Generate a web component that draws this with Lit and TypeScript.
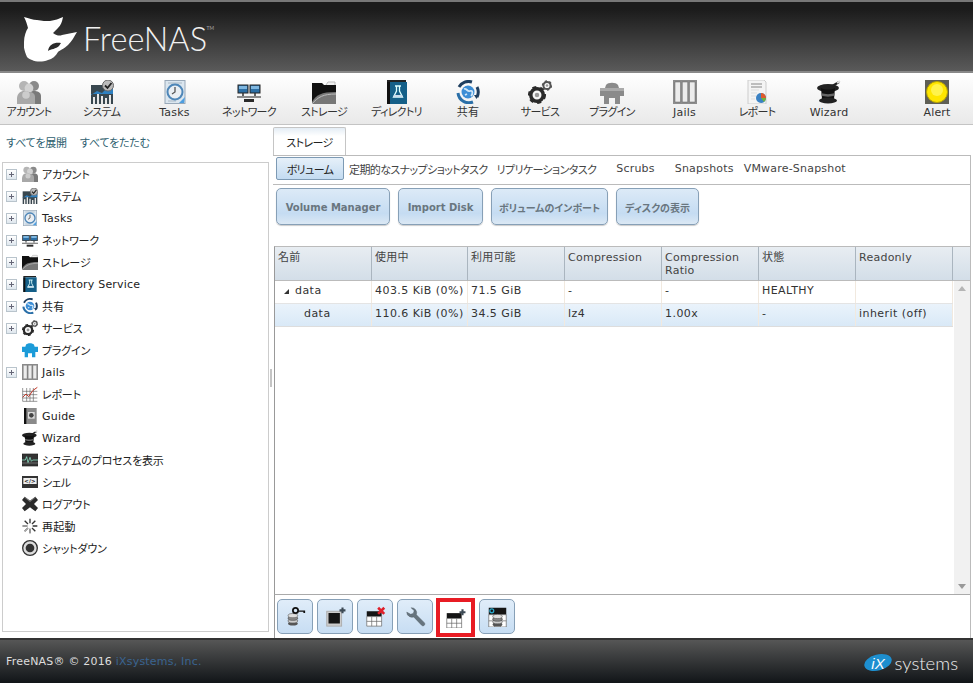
import { LitElement, html, css, svg } from "lit";
import { customElement } from "lit/decorators.js";

const gear = (x: number, y: number, r: number, c: string) => svg`<circle cx=${x} cy=${y} r=${r * 0.78} fill="none" stroke=${c} stroke-width=${r * 0.44}/><circle cx=${x} cy=${y} r=${r * 0.98} fill="none" stroke=${c} stroke-width=${r * 0.3} stroke-dasharray=${`${r * 0.5} ${r * 0.5}`}/><circle cx=${x} cy=${y} r=${r * 0.28} fill="#999"/>`;
const disks = (x: number, y: number) => svg`<ellipse cx=${x} cy=${y + 9} rx="5.5" ry="2.4" fill="#555"/><ellipse cx=${x} cy=${y + 6} rx="5.5" ry="2.4" fill="#ccc" stroke="#555" stroke-width=".7"/><ellipse cx=${x} cy=${y + 3} rx="5.5" ry="2.4" fill="#888" stroke="#444" stroke-width=".7"/><ellipse cx=${x} cy=${y} rx="5.5" ry="2.4" fill="#ddd" stroke="#555" stroke-width=".7"/>`;
const grid = (x: number, y: number, w: number, h: number) => svg`<rect x=${x} y=${y} width=${w} height=${h * 0.36} fill="#151515"/><path d=${`M${x} ${y + h * 0.36}h${w}v${h * 0.64}h${-w}zM${x} ${y + h * 0.68}h${w}M${x + w / 3} ${y + h * 0.36}v${h * 0.64}M${x + (2 * w) / 3} ${y + h * 0.36}v${h * 0.64}`} fill="#fff" stroke="#666" stroke-width=".8"/>`;
const plus = (x: number, y: number) => svg`<path d=${`M${x - 3.4} ${y}h6.8M${x} ${y - 3.4}v6.8`} stroke="#3d4a55" stroke-width="2.4"/>`;

const ICONS: Record<string, any> = {
  account: svg`<circle cx="7" cy="6" r="5" fill="#b5b5b5"/><circle cx="17" cy="6" r="5" fill="#8a8a8a"/><path d="M12 24v-9c0-3 2-4 5-4s7 1 7 5v8z" fill="#7a7a7a"/><circle cx="12" cy="8" r="4.400" fill="#d2d2d2"/><path d="M0 24c-1-9 2-13 7-13 2 0 3 0 5 1 4 0 6 2 6 5v7z" fill="#a8a8a8"/><circle cx="9" cy="15" r="3.800" fill="#ccc"/>`,
  system: svg`<rect x="1" y="5" width="22" height="19" fill="#39474f"/><path d="M1 15l6-4 5 2 6-6 5 1v6H1z" fill="#2f80c0"/><path d="M3 24v-7h2v7zm4 0v-10h2v10zm4 0v-8h2v8zm4 0v-6h2v6zm4 0v-9h2v9z" fill="#e8e8e8"/><circle cx="18" cy="5.500" r="5.500" fill="#bbb" stroke="#666"/><path d="M15 5.500l2.500 2.500 4-5" fill="none" stroke="#222" stroke-width="1.800"/>`,
  tasks: svg`<rect x="2" y="0.500" width="20" height="23" fill="#dbe6ef" stroke="#98a8b8"/><path d="M5 3h14M5 21h8" stroke="#aab8c4"/><circle cx="12" cy="12" r="7.500" fill="#e9eef3" stroke="#4e86b8" stroke-width="2"/><path d="M12 7v5l-3 2" fill="none" stroke="#555" stroke-width="1.300"/><path d="M16 23l6-6-1 6z" fill="#4e9ee0"/>`,
  network: svg`<rect x="1" y="5" width="10" height="8" fill="#2c6fa5" stroke="#222"/><rect x="13" y="5" width="10" height="8" fill="#2c6fa5" stroke="#222"/><path d="M2 6h8v3H2zm12 0h8v3h-8z" fill="#7db6e0"/><path d="M6 13v3M18 13v3" stroke="#333" stroke-width="1.500"/><path d="M0 16h24v2H0z" fill="#8a8a8a"/><path d="M7 19h10v3H7z" fill="#2a2a2a"/>`,
  storage: svg`<path d="M14 5l2-3h7v8h-9z" fill="#f0f0f0" stroke="#bbb"/><path d="M0 3h10l2 2h12v19H0z" fill="#111"/><path d="M0 22c4-7 9-10 24-10v12H0z" fill="#777"/><path d="M0 24c6-7 11-10 24-10" fill="none" stroke="#bbb"/>`,
  directory: svg`<path d="M2 0h19v2H2z" fill="#222"/><rect x="2" y="2" width="20" height="22" fill="#145f88"/><rect x="2" y="2" width="3" height="22" fill="#111"/><path d="M10 6h6M11.500 6v5l-3 6h9l-3-6V6" fill="none" stroke="#dff" stroke-width="1.300"/><path d="M9 15h8l1 2H8z" fill="#cde"/>`,
  share: svg`<circle cx="12" cy="12" r="6.500" fill="#3c8ed6"/><path d="M8 9c3-1 3 3 6 2s3 3 1 5M9 15l2-1" stroke="#cfe6f8" stroke-width="1.800" fill="none"/><path d="M3 7a11 11 0 0 1 13-5" fill="none" stroke="#1f3f60" stroke-width="3"/><path d="M21 7a11 11 0 0 1 0 10" fill="none" stroke="#1f3f60" stroke-width="3"/><path d="M17 22a11 11 0 0 1-15-9" fill="none" stroke="#2a6fa8" stroke-width="3"/><path d="M18 15l5 0-2.500 4z" fill="#1f3f60"/>`,
  services: svg`${gear(9, 15, 8, "#2a2a2a")}${gear(19, 5.500, 4.600, "#555")}`,
  plugins: svg`<path d="M6 5c2-3 10-3 12 0l1 3h5v8h-4v8h-5v-6h-6v6H4v-8H0V8h5z" fill="#8a8a8a"/><path d="M0 8h24v3H0z" fill="#aaa"/>`,
  pluginsBlue: svg`<path d="M6 4c2-3 10-3 12 0l1 3h5v8h-4v8h-5v-6h-6v6H4v-8H0V7h5z" fill="#1c9bd8"/>`,
  jails: svg`<rect x="0" y="0" width="24" height="24" fill="#8c8c8c"/><path d="M2 2h5.500v20H2zm7.300 0h5.400v20H9.300zm7.200 0H22v20h-5.500z" fill="#ececec" stroke="#666" stroke-width=".5"/>`,
  report: svg`<path d="M3 0h16l2 2v22H3z" fill="#f4f4f4" stroke="#ccc"/><path d="M6 4h11M6 7h11" stroke="#aaa" stroke-width="1.500"/><path d="M6 10h8M6 13h6M6 16h5M6 19h4" stroke="#ddd"/><circle cx="16" cy="18" r="5" fill="#3b82c4"/><path d="M16 18v-5a5 5 0 0 1 5 5z" fill="#e05a2b"/><path d="M16 18h5a5 5 0 0 1-2 4z" fill="#6cb33f"/>`,
  wizard: svg`<ellipse cx="11" cy="8" rx="11" ry="4" fill="#222"/><path d="M4 8c4 2 10 2 14 0l-1 11c-3 1-9 1-12 0z" fill="#111"/><path d="M4.500 13c3 1.500 10 1.500 13 0v2.500c-3 1.500-10 1.500-13 0z" fill="#666"/><ellipse cx="11" cy="20.500" rx="9" ry="3" fill="#222"/><path d="M12 8l10-6" stroke="#222" stroke-width="2.200"/><path d="M20 3l3-2" stroke="#ddd" stroke-width="2"/>`,
  alert: svg`<rect width="24" height="24" fill="#5f5f55"/><circle cx="12" cy="12" r="10.500" fill="#ffe600" stroke="#b8a400"/><circle cx="12" cy="10" r="6" fill="#fff34d"/>`,
  chart: svg`<path d="M1 3v20h22M1 8h22M1 13h22M1 18h22M7 3v20M12 3v20M17 3v20" fill="none" stroke="#555" stroke-width=".9"/><path d="M1 17l5-5 4 4 6-9 7-5" fill="none" stroke="#c0392b" stroke-width="1.500"/>`,
  guide: svg`<rect x="3" y="0" width="19" height="24" fill="#8a8a8a"/><rect x="3" y="0" width="3.500" height="24" fill="#111"/><rect x="9" y="6" width="10" height="10" fill="#ddd"/><circle cx="14" cy="11" r="3.500" fill="#444"/>`,
  process: svg`<rect x="0" y="3" width="24" height="18" fill="#333" stroke="#222"/><path d="M0 12h5l2-5 2 9 3-8 2 6 2-2h8" fill="none" stroke="#9fd" stroke-width="1"/><path d="M0 16.500h24" stroke="#888"/>`,
  shell: svg`<rect x="0" y="3" width="24" height="18" fill="#333"/><rect x="2" y="6" width="20" height="9" fill="#eee"/><text x="12" y="13.500" font-size="8" font-weight="700" text-anchor="middle" font-family="DejaVu Sans" fill="#222">&lt;/&gt;</text>`,
  logout: svg`<path d="M4 1l8 6 8-6 4 5-6 6 6 6-4 5-8-6-8 6-4-5 6-6-6-6z" fill="#2b2b2b"/><path d="M4 1l8 6 8-6 1 1-9 7-9-7z" fill="#777"/>`,
  restart: svg`<path d="M12 1v7M12 16v7M1 12h7M16 12h7M4 4l5 5M20 4l-5 5M4 20l5-5M20 20l-5-5" stroke="#333" stroke-width="2"/><path d="M12 16v7M4 20l5-5M1 12h7" stroke="#aaa" stroke-width="2"/>`,
  shutdown: svg`<circle cx="12" cy="12" r="11" fill="#ddd" stroke="#333" stroke-width="2"/><circle cx="12" cy="12" r="6.500" fill="#333"/>`,
  keyDisks: svg`${disks(9, 11)}<circle cx="12" cy="5" r="3" fill="none" stroke="#111" stroke-width="2"/><path d="M15 5h8v3h-2V6.500h-6z" fill="#111"/>`,
  screenPlus: svg`<rect x="2" y="6" width="17" height="17" fill="#ccc" stroke="#aaa"/><rect x="4" y="8" width="13" height="12" fill="#151515"/>${plus(20, 5)}`,
  tableX: svg`${grid(2, 6, 17, 17)}<path d="M15 2l7 7M22 2l-7 7" stroke="#e0202a" stroke-width="3"/>`,
  wrench: svg`<path d="M2 7a6 6 0 0 0 8 5.500l9 9.500c2 2 5 -1 3 -3l-9 -9a6 6 0 0 0-6-8l3.500 3.500-1 3-3 1z" fill="#66747e" stroke="#4a555d" stroke-width=".5"/>`,
  tablePlus: svg`${grid(2, 7, 17, 17)}${plus(20, 6)}`,
  tableDisks: svg`${grid(2, 2, 20, 22)}${disks(12, 12)}<circle cx="5.500" cy="5.500" r="2.200" fill="none" stroke="#2aa7c9" stroke-width="1.500"/>`,
};

const icon = (n: string) => html`<svg class="ic" viewBox="0 0 24 24" aria-hidden="true">${ICONS[n]}</svg>`;
const isKana = (s: string) => /[\u30a0-\u30ff]/.test(s);

const NAV = [
  ["account", "アカウント"], ["system", "システム"], ["tasks", "Tasks"], ["network", "ネットワーク"],
  ["storage", "ストレージ"], ["directory", "ディレクトリ"], ["share", "共有"], ["services", "サービス"],
  ["plugins", "プラグイン"], ["jails", "Jails"], ["report", "レポート"], ["wizard", "Wizard"],
];
const TREE: [string, string, boolean][] = [
  ["account", "アカウント", true], ["system", "システム", true], ["tasks", "Tasks", true],
  ["network", "ネットワーク", true], ["storage", "ストレージ", true], ["directory", "Directory Service", true],
  ["share", "共有", true], ["services", "サービス", true], ["pluginsBlue", "プラグイン", false],
  ["jails", "Jails", true], ["chart", "レポート", false], ["guide", "Guide", false], ["wizard", "Wizard", false],
  ["process", "システムのプロセスを表示", false], ["shell", "シェル", false], ["logout", "ログアウト", false],
  ["restart", "再起動", false], ["shutdown", "シャットダウン", false],
];
const HEAD = ["名前", "使用中", "利用可能", "Compression", "Compression Ratio", "状態", "Readonly"];
const ROWS = [
  ["data", "403.5 KiB (0%)", "71.5 GiB", "-", "-", "HEALTHY", ""],
  ["data", "110.6 KiB (0%)", "34.5 GiB", "lz4", "1.00x", "-", "inherit (off)"],
];

@customElement("app-root")
export class AppRoot extends LitElement {
  static styles = css`
    :host { display: flex; flex-direction: column; height: 683px; width: 973px; overflow: hidden; background: #fff; font: 11px "DejaVu Sans", "Noto Sans CJK JP", sans-serif; font-feature-settings: "palt"; letter-spacing: .2px; color: #222; }
    .ic { display: block; width: 24px; height: 24px; flex: none; }
    .header { height: 69px; flex: none; border-top: 2px solid #777; border-bottom: 2px solid #888; background: linear-gradient(#1b1b1b 10%, #5a5a5a); display: flex; align-items: center; padding-left: 24px; box-sizing: content-box; }
    .shark { width: 54px; height: 46px; flex: none; margin-top: 5px; }
    .brand { font: 300 32.5px Lato, "Open Sans", sans-serif; color: #f1f1f1; margin: 3px 0 0 5px; letter-spacing: 0; position: relative; }
    .brand sup { font-size: 5px; position: absolute; top: 6px; right: -7px; }
    .nav { height: 51px; flex: none; display: grid; grid-template-columns: 65px 73px 73px 76px 74px 71px 72px 72px 72px 73px 72px 72px 1fr 68px 2px; background: linear-gradient(#fff, #e9e9e9); border-bottom: 1px solid #c4c4c4; }
    .navi { display: flex; flex-direction: column; align-items: center; padding-top: 7px; color: #333; white-space: nowrap; }
    .navi:first-child { padding-right: 7px; }
    .navi span { line-height: 17px; }
    .navi .kana { letter-spacing: -.7px; }
    .alert { grid-column: 14; }
    .main { flex: 1; display: flex; min-height: 0; }
    .side { width: 269px; flex: none; display: flex; flex-direction: column; padding: 9px 0 6px 2px; box-sizing: border-box; }
    .links { display: flex; gap: 13px; padding-left: 4px; height: 28px; color: #2f5f70; letter-spacing: -.2px; }
    .tree { flex: 1; border: 1px solid #ccc; }
    .trow { height: 22px; display: flex; align-items: center; white-space: nowrap; }
    .trow .kana { letter-spacing: -.2px; }
    .exp { width: 9px; height: 9px; border: 1px solid #b9c4cc; background: linear-gradient(#fff, #dfe7ee); margin: 0 5px 0 3px; flex: none; position: relative; }
    .exp::before { content: ""; position: absolute; left: 2px; right: 2px; top: 4px; height: 1px; background: #667; }
    .exp::after { content: ""; position: absolute; top: 2px; bottom: 2px; left: 4px; width: 1px; background: #667; }
    .noexp { width: 11px; margin: 0 5px 0 3px; flex: none; }
    .trow .ic { width: 16px; height: 16px; margin: 0 4px 0 0; }
    .split { width: 4px; flex: none; display: flex; align-items: center; justify-content: center; padding-bottom: 8px; }
    .split i { display: block; width: 2px; height: 18px; background: #c4c4c4; }
    .right { flex: 1; min-width: 0; display: flex; flex-direction: column; padding: 2px 2px 0 0; }
    .tabs { height: 28px; flex: none; border-bottom: 1px solid #bbb; display: flex; }
    .tab { width: 73px; height: 28px; box-sizing: border-box; border: 1px solid #c5c5c5; border-bottom: 0; background: linear-gradient(#e4edf5, #fff 30%); display: flex; align-items: center; justify-content: center; border-radius: 2px 2px 0 0; letter-spacing: -.6px; }
    .panel { flex: 1; display: flex; flex-direction: column; min-height: 0; border-right: 1px solid #bbb; }
    .subtabs { height: 29px; flex: none; border-bottom: 1px solid #bbb; display: flex; align-items: center; padding: 0 0 3px 3px; box-sizing: border-box; color: #444; white-space: nowrap; }
    .subtabs span { flex: none; }
    .subtabs .kana { letter-spacing: -.62px; }
    .s1 { margin-left: 5px; }
    .s2 { margin-left: 9px; }
    .s3 { margin-left: 20px; }
    .s4 { margin-left: 20px; }
    .s5 { margin-left: 10px; }
    .on { width: 68px; height: 23px; box-sizing: border-box; border: 1px solid #7d9ab4; border-radius: 2px; background: linear-gradient(#e6f0f9, #c3dbf1); display: flex; align-items: center; justify-content: center; color: #222; }
    .actions { height: 61px; flex: none; display: flex; padding: 3px 0 0 3px; gap: 8px; box-sizing: border-box; }
    .act { height: 37px; box-sizing: border-box; padding-top: 2px; border: 1px solid #87a0b7; border-radius: 5px; background: linear-gradient(#dceaf7, #c5dcf2 70%, #dbe8f4); display: flex; align-items: center; justify-content: center; font-weight: 700; font-size: 10px; letter-spacing: 0; color: #69767f; white-space: nowrap; box-shadow: 0 1px 1px #ccc; }
    .gridwrap { flex: 1; min-height: 0; margin-left: 1px; border-style: solid; border-width: 1px 0 1px 1px; border-color: #bbb #bbb #aaa #999; display: flex; flex-direction: column; }
    .gr { display: grid; grid-template-columns: 97px 96px 97px 97px 97px 97px 97px 1fr; }
    .th { height: 34px; box-sizing: border-box; background: linear-gradient(#e8edf2, #d3dee8); border-right: 1px solid #aab5bf; border-bottom: 1px solid #bbb; padding: 4px 4px 0 3px; line-height: 13px; color: #444; }
    .th:nth-child(n+4) { letter-spacing: .25px; }
    .gbody { flex: 1; display: flex; min-height: 0; }
    .rows { width: 678px; flex: none; }
    .row { display: grid; grid-template-columns: 97px 96px 97px 97px 97px 97px 97px; height: 23px; box-sizing: border-box; border-bottom: 1px solid #e4e4e4; align-items: stretch; letter-spacing: .45px; }
    .row.sel { background: linear-gradient(#eaf3fb, #d9e9f7); border-bottom-color: #ddd; }
    .td { padding: 3px 0 0 3px; border-right: 1px solid #f1e9df; white-space: nowrap; color: #333; overflow: visible; }
    .first { display: flex; align-items: baseline; gap: 6px; padding-left: 9px; }
    .tri { width: 0; height: 0; border-left: 5px solid transparent; border-bottom: 5px solid #333; flex: none; }
    .second { padding-left: 29px; }
    .sb { flex: 1; background: #f1f1f1; display: flex; flex-direction: column; justify-content: space-between; align-items: center; padding: 5px 0; margin-left: 1px; }
    .sb i { display: block; width: 0; height: 0; border-left: 4px solid transparent; border-right: 4px solid transparent; }
    .sb .u { border-bottom: 5px solid #b5b5b5; }
    .sb .d { border-top: 5px solid #999; }
    .tools { height: 43px; flex: none; margin-left: 1px; display: flex; align-items: center; padding-left: 2px; gap: 4px; border-left: 1px solid #999; box-sizing: border-box; }
    .tb { width: 36px; height: 35px; box-sizing: border-box; border: 1px solid #87a0b7; border-radius: 5px; background: linear-gradient(#e0edf9, #c7ddf3); display: flex; align-items: center; justify-content: center; }
    .tb .ic { width: 21px; height: 21px; }
    .tb.hl { width: 39px; height: 39px; border: 4px solid #e81c24; border-radius: 0; background: #fff; margin: 1px 0 0 -1px; }
    .footer { height: 45px; flex: none; box-sizing: border-box; border-top: 2px solid #333; background: linear-gradient(#565656, #111518); display: flex; align-items: center; padding: 0 15px 0 6px; color: #ddd; justify-content: space-between; }
    .footer a { color: #3a6491; }
    .ix { display: flex; align-items: center; gap: 3px; margin-top: 2px; }
    .ixb { width: 28px; height: 19px; flex: none; }
    .ixt { font: 300 18.5px Lato, "Open Sans", sans-serif; color: #eee; letter-spacing: 0; }
  `;

  render() {
    return html`
      <div class="header">
        <svg class="shark" viewBox="0 0 54 46" aria-hidden="true">
          <path fill="#fff" d="M0 1C5 2 9 4 13 4 18 5 22 5 26 5 31 4 35 3 39 1 38 6 37 9 34 12L29 17C33 20 36 20 38 19L53 16C50 21 48 25 44 29 40 33 36 34 34 36 32 40 28 43 24 44 19 46 12 46 8 44 5 43 4 42 3 41 1 36-1 31 0 26 0 20 2 15 4 12 3 8 2 5 0 1Z"/>
          <path fill="#2a2a2a" d="M37 27c-6-1-12 1-13 8 3-2 8-2 11-5z"/>
        </svg>
        <div class="brand">FreeNAS<sup>TM</sup></div>
      </div>
      <div class="nav">
        ${NAV.map(([i, t]) => html`<div class="navi">${icon(i)}<span class=${isKana(t) ? "kana" : ""}>${t}</span></div>`)}
        <div class="navi alert">${icon("alert")}<span>Alert</span></div>
      </div>
      <div class="main">
        <div class="side">
          <div class="links"><span>すべてを展開</span><span>すべてをたたむ</span></div>
          <div class="tree">
            ${TREE.map(([i, t, e]) => html`<div class="trow"><span class=${e ? "exp" : "noexp"}></span>${icon(i)}<span class=${isKana(t) ? "kana" : ""}>${t}</span></div>`)}
          </div>
        </div>
        <div class="split"><i></i></div>
        <div class="right">
          <div class="tabs"><div class="tab">ストレージ</div></div>
          <div class="panel">
            <div class="subtabs">
              <span class="on kana">ボリューム</span>
              <span class="s1 kana">定期的なスナップショットタスク</span>
              <span class="s2 kana">リプリケーションタスク</span>
              <span class="s3">Scrubs</span>
              <span class="s4">Snapshots</span>
              <span class="s5">VMware-Snapshot</span>
            </div>
            <div class="actions">
              <div class="act" style="width:114px">Volume Manager</div>
              <div class="act" style="width:85px">Import Disk</div>
              <div class="act" style="width:117px">ボリュームのインポート</div>
              <div class="act" style="width:83px">ディスクの表示</div>
            </div>
            <div class="gridwrap">
              <div class="gr">
                ${HEAD.map((h) => html`<div class="th">${h}</div>`)}
                <div class="th" style="border-right:0"></div>
              </div>
              <div class="gbody">
                <div class="rows">
                  ${ROWS.map((r, ri) => html`<div class="row ${ri ? "sel" : ""}">
                    ${r.map((c, ci) => html`<div class="td ${ci === 0 ? (ri ? "second" : "first") : ""}">${ci === 0 && !ri ? html`<span class="tri"></span>` : ""}${c}</div>`)}
                  </div>`)}
                </div>
                <div class="sb"><i class="u"></i><i class="d"></i></div>
              </div>
            </div>
            <div class="tools">
              <div class="tb">${icon("keyDisks")}</div>
              <div class="tb">${icon("screenPlus")}</div>
              <div class="tb">${icon("tableX")}</div>
              <div class="tb">${icon("wrench")}</div>
              <div class="tb hl">${icon("tablePlus")}</div>
              <div class="tb">${icon("tableDisks")}</div>
            </div>
          </div>
        </div>
      </div>
      <div class="footer">
        <span>FreeNAS® © 2016 <a>iXsystems, Inc.</a></span>
        <div class="ix">
          <svg class="ixb" viewBox="0 0 28 19" aria-hidden="true">
            <ellipse cx="14" cy="9.500" rx="14" ry="8" fill="#1d8fd0" transform="rotate(-14 14 9.500)"/>
            <text x="14" y="15.500" font-size="15" text-anchor="middle" font-family="Liberation Sans" font-style="italic" fill="#fff">iX</text>
          </svg>
          <span class="ixt">systems</span>
        </div>
      </div>
    `;
  }
}
